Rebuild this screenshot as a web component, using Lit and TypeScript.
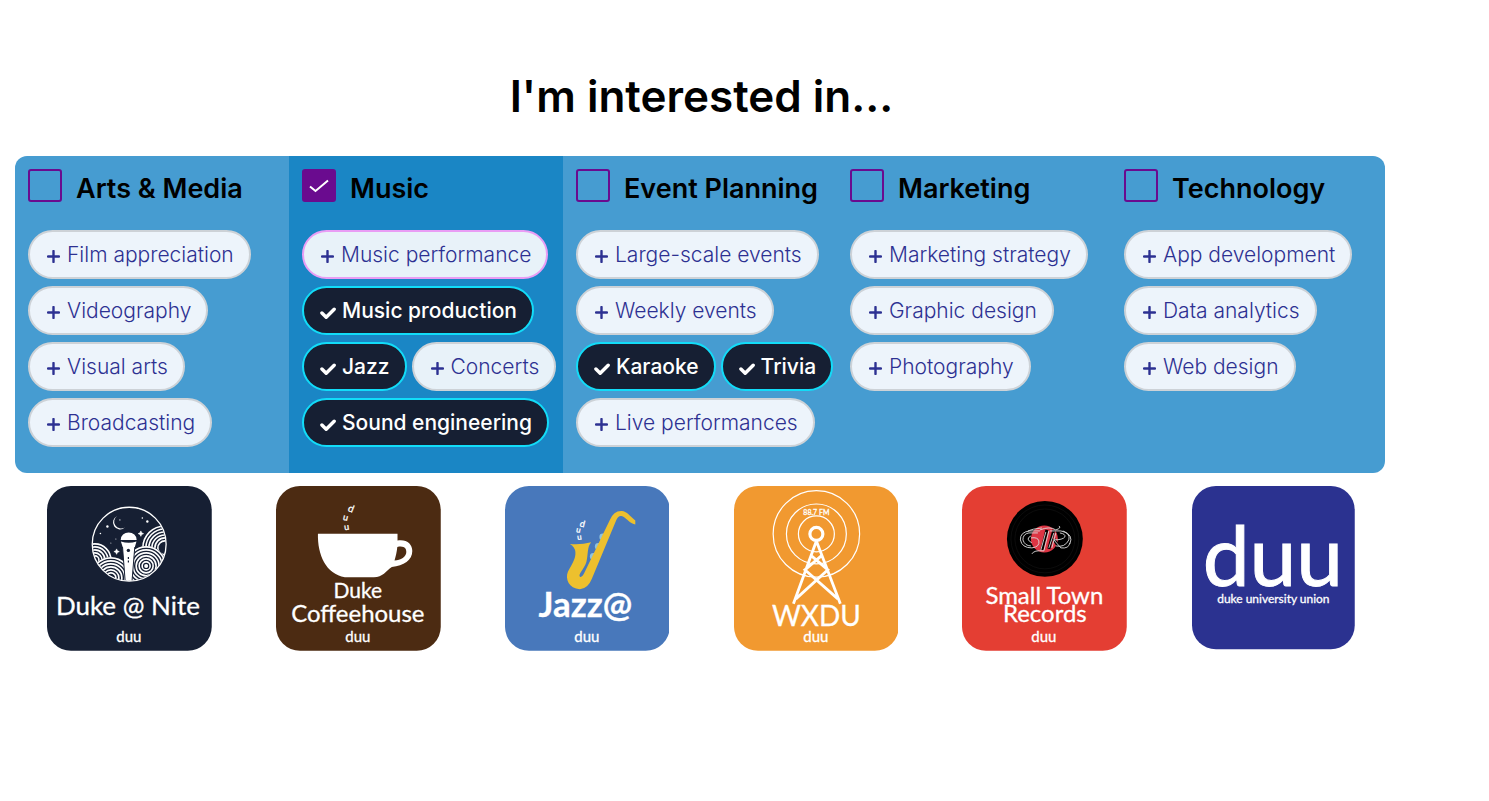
import { LitElement, html, svg, css } from "lit";
import { customElement, state } from "lit/decorators.js";
import { classMap } from "lit/directives/class-map.js";

interface Tag { label: string; on?: boolean; active?: boolean; }
interface Category { name: string; on?: boolean; tags: Tag[]; }

const rings = (cx: number, cy: number, radii: number[]) =>
  svg`<circle cx=${cx} cy=${cy} r=${radii[0] + 1} fill="#161f33"/>${radii.map(
    (r) => svg`<circle cx=${cx} cy=${cy} r=${r} fill="none" stroke="#fff" stroke-width="1.6"/>`
  )}`;

const duu = svg`<text class="duu" x="82" y="156">duu</text>`;

const logos = [
  {
    name: "Duke @ Nite",
    art: svg`
      <rect width="165" height="165" rx="24" fill="#161f33"/>
      <clipPath id="night"><circle cx="82.3" cy="58.3" r="36.5"/></clipPath>
      <g clip-path="url(#night)">
        ${rings(118, 62, [22, 19, 16, 13, 10, 7])}
        ${rings(48, 74, [16, 13, 10, 7, 4])}
        ${rings(64, 92, [20, 17, 14, 11, 8, 5])}
        ${rings(99.3, 80, [19, 16, 13, 10, 7, 4])}
        <circle cx="99.3" cy="80" r="2" fill="#fff"/>
        <path d="M75.5 59h12.6L85 97h-6.600z" fill="#fff" stroke="#161f33" stroke-width="1"/>
        <path d="M73.800 54a8 7.500 0 0 1 16 0z M74 55.500q8 2.500 15.600 0l-1.600 5.500q-6 2-12.200 0z" fill="#fff"/>
        <circle cx="81.500" cy="64.500" r="1.700" fill="#161f33"/>
        <path d="M81.500 71v2m0 1.500v2" stroke="#161f33" stroke-width="1.200"/>
      </g>
      <circle cx="82.300" cy="58.300" r="37" fill="none" stroke="#fff" stroke-width="1.300"/>
      <path d="M70.500 30a7 7 0 1 0 7.500 11.500a7 6.800 0 0 1-7.500-11.500z" fill="#fff"/>
      <g fill="#fff">
        <circle cx="60.500" cy="40.500" r="1.200"/><circle cx="53.500" cy="47.500" r=".8"/>
        <circle cx="95.500" cy="32" r=".8"/><circle cx="100.500" cy="35.500" r="1.200"/>
        <circle cx="69" cy="53" r=".5"/><circle cx="64" cy="57" r=".5"/><circle cx="73" cy="34" r=".6"/>
        <path d="M94 45l.8 1.900 1.900.8-1.900.8-.8 1.900-.8-1.900-1.900-.8 1.900-.8z M69.700 63l.8 1.900 1.900.8-1.900.8-.8 1.900-.8-1.900-1.900-.8 1.900-.8z" stroke="#fff" stroke-width=".6"/>
      </g>
      <text x="81" y="129" font-size="26">Duke @ Nite</text>${duu}`,
  },
  {
    name: "Duke Coffeehouse",
    art: svg`
      <rect width="165" height="165" rx="24" fill="#4c2b12"/>
      <path fill="#fff" fill-rule="evenodd" d="M42 47.700H121.700V54.500C131 53 136.500 58 136.500 65C136.500 74 128 80 116 81C110 85 107 91.300 98 91.300H69C50 88 41.500 69 42 47.700z M121.500 61C129 59.500 130.500 63 130.500 66C130.500 71 125 74 118.700 74.500C120 70 121 66 121.500 61z"/>
      <text x="75" y="26" font-size="10" transform="rotate(22 75 23)">d</text>
      <text x="69.700" y="34.500" font-size="9" transform="rotate(14 69.700 32)">u</text>
      <text x="70.700" y="44" font-size="9" transform="rotate(-8 70.700 41)">u</text>
      <text x="82" y="112" font-size="21">Duke</text>
      <text x="82" y="136" font-size="24">Coffeehouse</text>${duu}`,
  },
  {
    name: "Jazz@",
    art: svg`
      <rect width="165" height="165" rx="24" fill="#4878bb"/>
      <g fill="#8fc3dc"><circle cx="88.500" cy="70.500" r="3.500"/><circle cx="93.500" cy="60.500" r="3.500"/><circle cx="98" cy="51" r="3.500"/></g>
      <path fill="#edc02e" d="M65 58Q76 59 86.300 56.300C82 61 83.500 69 81.500 76C79.500 83 73 88 75 91Q77 92 79 88L105 34Q109 24.500 117 25C122 25.500 124 29 130.500 34.500V38.500C124 37 121 31 116.500 30Q113.500 29.500 111.500 34L87 93Q83 103 75 103.500C64 103 60 93 63 86C67 78 71 73 70.500 66Q70 61 65 58z"/>
      <text x="77.500" y="41" font-size="9" transform="rotate(14 77 38)">d</text>
      <text x="73.500" y="46.500" font-size="8" transform="rotate(12 73 44)">u</text>
      <text x="74.500" y="54" font-size="8" transform="rotate(-8 74 51)">u</text>
      <text x="80.500" y="131" font-size="35" font-weight="700">Jazz@</text>${duu}`,
  },
  {
    name: "WXDU",
    art: svg`
      <rect width="165" height="165" rx="24" fill="#f19930"/>
      <g fill="none" stroke="#fff">
        <g stroke-width="1.200"><circle cx="82.500" cy="48" r="18"/><circle cx="82.500" cy="48" r="30"/><circle cx="82.500" cy="48" r="43.300"/></g>
        <circle cx="82.500" cy="48" r="6.500" stroke-width="3.200"/>
        <path stroke-width="2.800" d="M82.500 55L59.500 118M82.500 55L106.500 118M77 69.500L94 84L62 113M88 69.500L71 84L104 113"/>
      </g>
      <text x="82.500" y="29" font-size="7">88.7 FM</text>
      <text x="82.500" y="140.500" font-size="28">WXDU</text>${duu}`,
  },
  {
    name: "Small Town Records",
    art: svg`
      <rect width="165" height="165" rx="24" fill="#e43e33"/>
      <circle cx="83" cy="53" r="38"/>
      <g fill="none" stroke="#181818" stroke-width=".5"><circle cx="83" cy="53" r="34"/><circle cx="83" cy="53" r="30"/></g>
      <circle cx="82.500" cy="53" r="13.500" fill="#dd3544"/>
      <g fill="none" stroke="#000" stroke-width="3"><path d="M85 44L80 64M92 44L87 63M92 53L98 63"/></g>
      <g fill="none" stroke="#ddd" stroke-width=".9">
        <path d="M78 45H68Q58 46 58.500 54Q60 62 70 62Q78 61 77 55Q76 51 69 52M76 47H67Q61 48 61 54Q63 60 69 60M80 42Q70 43 66 45M69 50Q63 53 70 57"/>
        <path d="M78 44Q88 40 94 44Q100 42 97 40M84 46L79 64M87 45L82 65Q72 64 70 68M92 47L87 62M94 47L90 62"/>
        <path d="M88 45H99Q109 47 107 54Q103 62 94 60M98 47Q104 48 103 51Q101 54 92 54L99 62Q107 63 108 57M101 45Q112 49 108 58"/>
      </g>
      <text x="82.500" y="118" font-size="24">Small Town</text>
      <text x="83" y="136" font-size="24">Records</text>${duu}`,
  },
  {
    name: "Duke University Union",
    art: svg`
      <rect x="1" width="163" height="163.500" rx="24" fill="#2b3290"/>
      <text class="wordmark" x="82" y="100.500" font-size="84">duu</text>
      <text x="82.500" y="117" font-size="12">duke university union</text>`,
  },
];

const plusIcon = html`<svg class="icon" viewBox="0 0 13 13" aria-hidden="true"><path d="M6.500 1v11M1 6.500h11" fill="none" stroke="currentColor" stroke-width="2.400" stroke-linecap="round"/></svg>`;
const tickIcon = html`<svg class="icon wide" viewBox="0 0 15 13" aria-hidden="true"><path d="M1.800 6.500l4 4 7.500-7.500" fill="none" stroke="currentColor" stroke-width="3.200" stroke-linecap="round" stroke-linejoin="round"/></svg>`;

@customElement("app-root")
export class AppRoot extends LitElement {
  static styles = css`
    :host { display: block; font-family: Inter, "Liberation Sans", sans-serif; color: #000; }
    * { box-sizing: border-box; }
    .page { padding: 64px 101px 24px 15px; }
    .title { margin: 0 0 28px 0; font-size: 44px; line-height: 64px; font-weight: 600; text-align: center; }
    .panel { display: grid; grid-template-columns: repeat(5, 1fr); margin-right: 3px; border-radius: 12px; overflow: hidden; background: #469cd1; }
    .column { min-width: 0; padding: 13px 0 26px 13px; }
    .column.selected { background: #1a86c5; }
    .head { display: flex; gap: 14px; height: 61px; align-items: flex-start; white-space: nowrap; }
    .name { font-size: 27px; line-height: 40px; font-weight: 600; margin: 0; }
    .box { display: grid; width: 34px; height: 33px; flex: none; }
    .box > * { grid-area: 1 / 1; }
    .check { appearance: none; width: 34px; height: 33px; margin: 0; border: 2px solid #6a0b8f; border-radius: 3px; }
    .check:checked { background: #6a0b8f; }
    .mark { width: 34px; height: 33px; pointer-events: none; }
    .tags { display: flex; flex-wrap: wrap; gap: 7px 5px; }
    .tag { display: flex; align-items: center; gap: 7px; height: 49px; padding: 0 15px 0 17px; border: 2px solid #cdd2d7; border-radius: 25px; background: #edf4fb; color: #2d3192; font-family: inherit; font-size: 21px; font-weight: 300; line-height: 28px; white-space: nowrap; cursor: pointer; }
    .selected .tag { background: #e8f2f9; }
    .tag.active { border-color: #e99df5; }
    .tag.on, .selected .tag.on { border-color: #12dcf8; background: #161f33; color: #fff; font-weight: 500; gap: 6px; padding-left: 16px; }
    .icon { width: 13px; height: 13px; flex: none; margin-top: 4px; }
    .icon.wide { width: 16px; height: 14px; }
    .logos { display: grid; grid-template-columns: repeat(6, 1fr); justify-items: center; margin-top: 13px; }
    .logo { display: block; width: 72%; }
    .logo svg { display: block; width: 100%; }
    .logo text { font-family: Lato, sans-serif; fill: #fff; stroke: #fff; stroke-width: 0.3; text-anchor: middle; }
    .logo .wordmark { stroke-width: 1; }
    .logo .duu { font-size: 15px; }
  `;

  @state() private categories: Category[] = [
    { name: "Arts & Media", tags: [{ label: "Film appreciation" }, { label: "Videography" }, { label: "Visual arts" }, { label: "Broadcasting" }] },
    { name: "Music", on: true, tags: [{ label: "Music performance", active: true }, { label: "Music production", on: true }, { label: "Jazz", on: true }, { label: "Concerts" }, { label: "Sound engineering", on: true }] },
    { name: "Event Planning", tags: [{ label: "Large-scale events" }, { label: "Weekly events" }, { label: "Karaoke", on: true }, { label: "Trivia", on: true }, { label: "Live performances" }] },
    { name: "Marketing", tags: [{ label: "Marketing strategy" }, { label: "Graphic design" }, { label: "Photography" }] },
    { name: "Technology", tags: [{ label: "App development" }, { label: "Data analytics" }, { label: "Web design" }] },
  ];

  private toggle(item: { on?: boolean }) {
    item.on = !item.on;
    this.requestUpdate();
  }

  private column(c: Category, i: number) {
    return html`<section class=${classMap({ column: true, selected: !!c.on })}>
      <div class="head">
        <span class="box">
          <input class="check" type="checkbox" id="cat-${i}" .checked=${!!c.on} @change=${() => this.toggle(c)} />
          ${c.on ? html`<svg class="mark" viewBox="0 0 34 33" aria-hidden="true"><path d="M8 17.500l5.500 4.500L26 11.500" fill="none" stroke="#fff" stroke-width="2"/></svg>` : ""}
        </span>
        <label class="name" for="cat-${i}">${c.name}</label>
      </div>
      <div class="tags">
        ${c.tags.map((t) => html`<button type="button" class=${classMap({ tag: true, on: !!t.on, active: !!t.active })}
          aria-pressed=${t.on ? "true" : "false"} @click=${() => this.toggle(t)}>${t.on ? tickIcon : plusIcon}<span>${t.label}</span></button>`)}
      </div>
    </section>`;
  }

  render() {
    return html`<main class="page">
      <h1 class="title">I'm interested in...</h1>
      <div class="panel">${this.categories.map((c, i) => this.column(c, i))}</div>
      <nav class="logos" aria-label="Groups">
        ${logos.map((l) => html`<a class="logo" href="#" aria-label=${l.name}><svg viewBox="0 0 165 165">${l.art}</svg></a>`)}
      </nav>
    </main>`;
  }
}
